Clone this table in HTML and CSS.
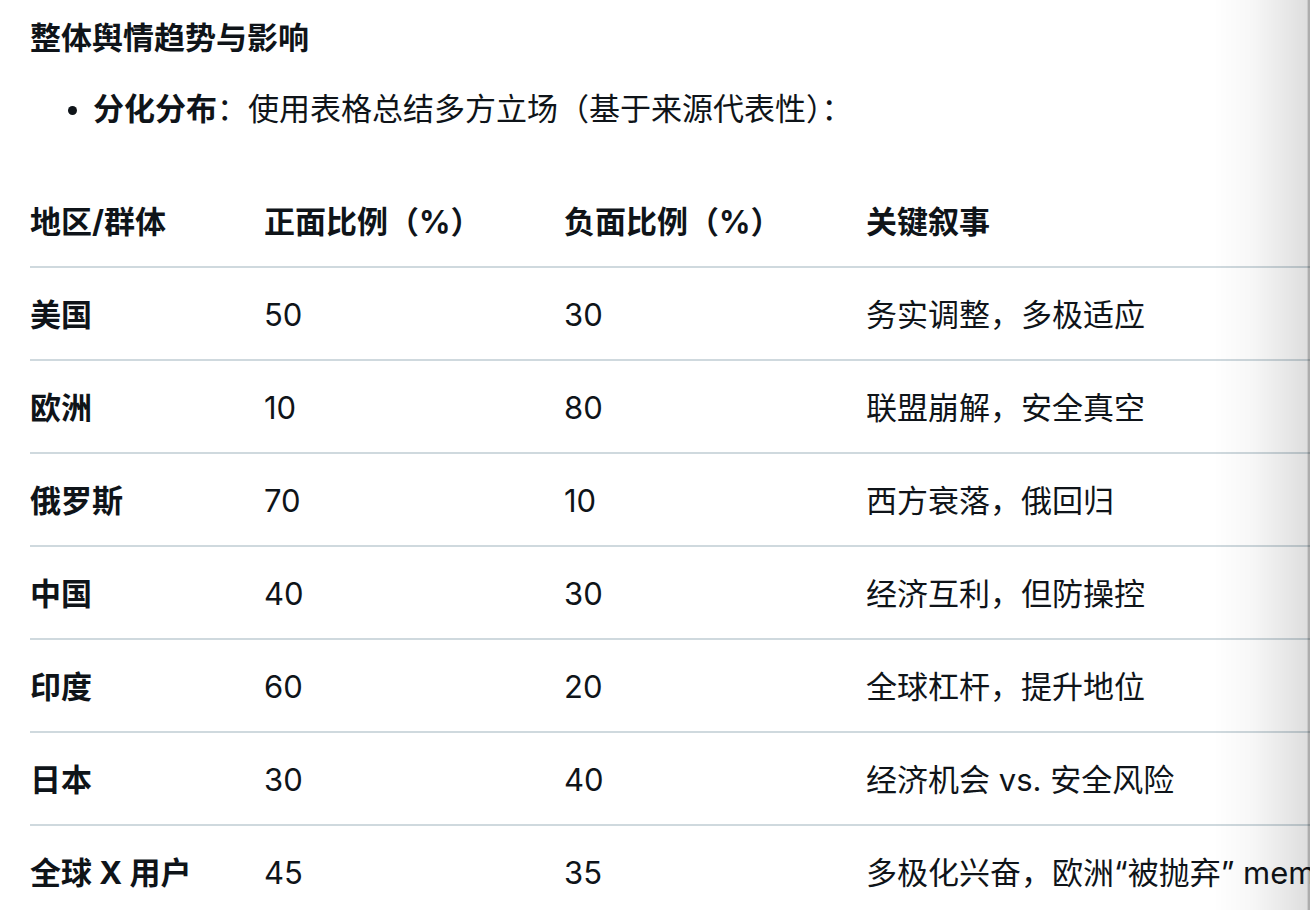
FILE: index.html
```html
<!DOCTYPE html>
<html lang="zh-CN">
<head>
<meta charset="utf-8">
<link rel="stylesheet" href="styles.css">
</head>
<body>
<div class="page">
  <h3 class="title">整体舆情趋势与影响</h3>
  <ul class="list">
    <li><strong>分化分布</strong>：使用表格总结多方立场（基于来源代表性）：</li>
  </ul>
  <div class="table-wrap">
    <table class="grid">
      <thead>
        <tr><th class="c1">地区/群体</th><th class="c2">正面比例（%）</th><th class="c3">负面比例（%）</th><th class="c4">关键叙事</th></tr>
      </thead>
      <tbody>
        <tr><td class="name">美国</td><td>50</td><td>30</td><td>务实调整，多极适应</td></tr>
        <tr><td class="name">欧洲</td><td>10</td><td>80</td><td>联盟崩解，安全真空</td></tr>
        <tr><td class="name">俄罗斯</td><td>70</td><td>10</td><td>西方衰落，俄回归</td></tr>
        <tr><td class="name">中国</td><td>40</td><td>30</td><td>经济互利，但防操控</td></tr>
        <tr><td class="name">印度</td><td>60</td><td>20</td><td>全球杠杆，提升地位</td></tr>
        <tr><td class="name">日本</td><td>30</td><td>40</td><td>经济机会 vs. 安全风险</td></tr>
        <tr><td class="name">全球 X 用户</td><td>45</td><td>35</td><td>多极化兴奋，欧洲“被抛弃” memes 泛滥</td></tr>
      </tbody>
    </table>
  </div>
</div>
<div class="shade"></div>
</body>
</html>
```
FILE: styles.css
```css
html, body {
  margin: 0;
  padding: 0;
  background: #ffffff;
}
body {
  font-family: Inter, "Noto Sans CJK SC", sans-serif;
  font-size: 31px;
  color: #0f1419;
  overflow: hidden;
  height: 910px;
}
.page {
  padding: 14px 0 0 30px;
}
.title {
  margin: 0;
  font-size: 31px;
  font-weight: 700;
  line-height: 47px;
}
.list {
  margin: 24px 0 0 0;
  padding: 0 0 0 63px;
  line-height: 47px;
}
.list li::marker {
  font-size: 28px;
}
.list strong {
  font-weight: 700;
}
.table-wrap {
  margin-top: 43px;
  overflow: hidden;
}
.grid {
  border-collapse: collapse;
  white-space: nowrap;
  width: 1700px;
}
.grid th, .grid td {
  text-align: left;
  padding: 23px 0 21px 0;
  line-height: 47px;
  border-bottom: 2px solid #cfd9de;
  vertical-align: middle;
}
.grid th {
  font-weight: 700;
}
.grid td.name {
  font-weight: 700;
}
.grid .c1 { width: 234px; }
.grid .c2 { width: 300px; }
.grid .c3 { width: 302px; }
.shade {
  position: fixed;
  top: 0;
  right: 0;
  bottom: 0;
  width: 96px;
  background: linear-gradient(to right, rgba(0,0,0,0) 0%, rgba(0,0,0,0.03) 40%, rgba(0,0,0,0.13) 97%, rgba(0,0,0,0.32) 98%, rgba(0,0,0,0.32) 100%);
  pointer-events: none;
}
```
